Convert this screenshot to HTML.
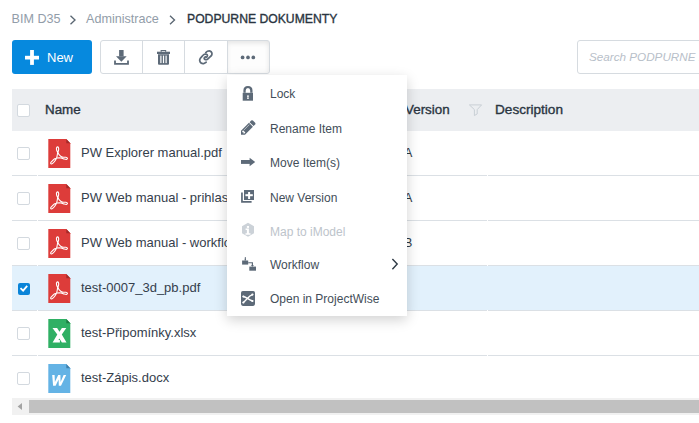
<!DOCTYPE html>
<html><head><meta charset="utf-8">
<style>
html,body{margin:0;padding:0;width:699px;height:423px;overflow:hidden;background:#fff;font-family:"Liberation Sans",sans-serif;}
.a{position:absolute;}
.t{position:absolute;white-space:nowrap;line-height:1;}
svg{position:absolute;overflow:visible;left:0;top:0;}
.bc{color:#929da9;font-size:12.6px;}
.bold{font-weight:400;color:#2a3541;-webkit-text-stroke:0.35px #2a3541;}
.cb{position:absolute;left:17px;width:11px;height:11px;border:1px solid #d3d9df;border-radius:2px;background:#fff;}
.row{position:absolute;left:12px;width:687px;height:44px;border-bottom:1px solid #dbe0e5;}
.rt{position:absolute;left:81px;font-size:13px;color:#35404c;white-space:nowrap;line-height:1;}
.ver{position:absolute;left:404px;font-size:12.5px;color:#2f3a45;line-height:1;}
.mi{position:absolute;left:270px;font-size:12px;color:#434e59;line-height:1;white-space:nowrap;}
</style></head><body>

<!-- breadcrumb -->
<div class="t bc" style="left:11.5px;top:13px;">BIM D35</div>
<svg width="699" height="30"><polyline points="70.5,15.8 75,20 70.5,24.2" fill="none" stroke="#5a6672" stroke-width="1.35"/><polyline points="170,15.8 174.5,20 170,24.2" fill="none" stroke="#5a6672" stroke-width="1.35"/></svg>
<div class="t bc" style="left:86px;top:13px;">Administrace</div>
<div class="t bold" style="left:187px;top:13px;font-size:12.2px;">PODPURNE DOKUMENTY</div>

<!-- New button -->
<div class="a" style="left:12px;top:40px;width:80px;height:34px;background:#0689de;border-radius:3px;"></div>
<svg width="100" height="80"><rect x="25" y="55.8" width="14" height="3.7" fill="#fff"/><rect x="30.1" y="50" width="3.8" height="14.9" fill="#fff"/></svg>
<div class="t" style="left:47px;top:51px;font-size:13px;color:#fff;">New</div>

<!-- toolbar group -->
<div class="a" style="left:227px;top:40px;width:42px;height:33px;border-radius:0 3px 3px 0;background:#fdfdfd;box-shadow:inset 0 3px 5px rgba(0,0,0,.1);"></div>
<div class="a" style="left:100px;top:40px;width:168px;height:32px;border:1px solid #d6dbe0;border-radius:3px;"></div>
<div class="a" style="left:142px;top:40px;width:1px;height:33px;background:#d6dbe0;"></div>
<div class="a" style="left:184px;top:40px;width:1px;height:33px;background:#d6dbe0;"></div>
<div class="a" style="left:227px;top:40px;width:1px;height:33px;background:#d6dbe0;"></div>
<svg width="300" height="80" fill="#5d6a78">
  <!-- download -->
  <rect x="119.1" y="50" width="4.5" height="6.4"/>
  <polygon points="116,56.2 126.7,56.2 121.35,61.7"/>
  <path d="M114.1 60.5h1.8v2.4h11.2v-2.4h1.8v4.2h-14.8z"/>
  <!-- trash -->
  <path d="M160.6 51.8v-1.8h5.6v1.8h-1.2v-0.7h-3.2v0.7z"/>
  <rect x="157" y="51.7" width="13" height="2.3"/>
  <path d="M158 54.3h11v9.4q0 1 -1 1h-9q-1 0 -1 -1z"/>
  <rect x="160.3" y="55.6" width="1.2" height="7.5" fill="#fff"/>
  <rect x="162.9" y="55.6" width="1.2" height="7.5" fill="#fff"/>
  <rect x="165.5" y="55.6" width="1.2" height="7.5" fill="#fff"/>
  <!-- link -->
  <g fill="none" stroke="#5d6a78" stroke-width="1.75" stroke-linecap="round" stroke-linejoin="round">
    <path d="M205.75 52.59C206.04 52.37 206.73 51.52 207.46 51.27C208.18 51.02 209.38 50.83 210.10 51.08C210.83 51.33 211.55 52.09 211.80 52.78C212.06 53.48 212.09 54.39 211.62 55.24C211.14 56.09 209.79 57.16 208.97 57.89C208.15 58.61 207.42 59.37 206.70 59.59C205.97 59.81 205.03 59.46 204.62 59.21C204.21 58.96 204.08 58.49 204.24 58.08C204.40 57.67 205.34 56.97 205.56 56.75"/>
    <path d="M206.13 62.24C205.72 62.46 204.52 63.44 203.67 63.56C202.82 63.69 201.69 63.47 201.03 62.99C200.36 62.52 199.83 61.48 199.70 60.72C199.58 59.97 199.92 59.15 200.27 58.46C200.62 57.76 201.09 57.26 201.78 56.56C202.48 55.87 203.64 54.67 204.43 54.30C205.22 53.92 206.01 54.07 206.51 54.30C207.01 54.52 207.42 55.15 207.46 55.62C207.49 56.09 206.83 56.88 206.70 57.13"/>
  </g>
  <!-- dots -->
  <circle cx="242.6" cy="57.4" r="1.85"/>
  <circle cx="248" cy="57.4" r="1.85"/>
  <circle cx="253.3" cy="57.4" r="1.85"/>
</svg>

<!-- search -->
<div class="a" style="left:577px;top:40px;width:140px;height:32px;border:1px solid #d6dbe0;border-radius:3px;"></div>
<div class="t" style="left:589px;top:50.5px;font-size:11.7px;color:#b8c0c9;font-style:italic;">Search PODPURNE DOKUMENTY</div>

<!-- table header -->
<div class="a" style="left:12px;top:89px;width:687px;height:42px;background:#eceef1;"></div>
<div class="cb" style="top:104px;"></div>
<div class="t bold" style="left:45px;top:103px;font-size:13.4px;">Name</div>
<div class="t bold" style="left:405px;top:103px;font-size:13.4px;">Version</div>
<svg width="699" height="140"><path d="M469.4 104.9H481.6L477.2 109.6V113.9L474.4 115.6V109.6Z" fill="none" stroke="#c9cfd5" stroke-width="1" stroke-linejoin="round"/></svg>
<div class="t bold" style="left:495px;top:103px;font-size:13.6px;">Description</div>

<!-- rows -->
<div class="row" style="top:131px;"></div>
<div class="row" style="top:176px;"></div>
<div class="row" style="top:221px;"></div>
<div class="row" style="top:266px;background:#e2f1fc;"></div>
<div class="row" style="top:311px;"></div>
<div class="row" style="top:356px;"></div>

<div class="a" style="left:37px;top:175px;width:1px;height:1px;background:#fff;"></div><div class="a" style="left:487px;top:175px;width:1px;height:1px;background:#fff;"></div><div class="a" style="left:37px;top:220px;width:1px;height:1px;background:#fff;"></div><div class="a" style="left:487px;top:220px;width:1px;height:1px;background:#fff;"></div><div class="a" style="left:37px;top:265px;width:1px;height:1px;background:#fff;"></div><div class="a" style="left:487px;top:265px;width:1px;height:1px;background:#fff;"></div><div class="a" style="left:37px;top:310px;width:1px;height:1px;background:#fff;"></div><div class="a" style="left:487px;top:310px;width:1px;height:1px;background:#fff;"></div><div class="a" style="left:37px;top:355px;width:1px;height:1px;background:#fff;"></div><div class="a" style="left:487px;top:355px;width:1px;height:1px;background:#fff;"></div>
<div class="cb" style="top:147px;"></div>
<div class="cb" style="top:192px;"></div>
<div class="cb" style="top:237px;"></div>
<div class="a" style="left:17.5px;top:282.5px;width:12px;height:12px;border-radius:2px;background:#0a84d8;"></div>
<div class="cb" style="top:327px;"></div>
<div class="cb" style="top:372px;"></div>
<svg width="100" height="423">
  <polyline points="20.5,288.2 23.1,290.7 27.2,285.9" fill="none" stroke="#fff" stroke-width="1.8"/>
</svg>

<!-- file icons -->
<svg width="100" height="423">
  <g transform="translate(48.3 139)">
      <path d="M0 0h18l4 4.2v24.8h-22z" fill="#dd3c3a"/>
      <path d="M18 0l4 4.2h-4z" fill="#a32a28"/>
      <path d="M9.34 13.62C9.17 13.20 8.50 11.85 8.32 11.07C8.13 10.29 8.09 9.46 8.23 8.94C8.37 8.41 8.84 7.94 9.17 7.91C9.50 7.88 9.99 8.31 10.19 8.76C10.39 9.22 10.43 9.83 10.36 10.64C10.29 11.45 9.58 12.66 9.77 13.62C9.95 14.59 10.76 15.68 11.47 16.44C12.18 17.19 13.03 17.83 14.03 18.14C15.02 18.45 16.59 18.11 17.44 18.31C18.29 18.51 19.04 18.98 19.14 19.34C19.24 19.69 18.68 20.36 18.04 20.44C17.40 20.53 16.19 20.09 15.31 19.85C14.43 19.61 13.74 19.14 12.75 18.99C11.76 18.85 10.41 18.85 9.34 18.99C8.27 19.14 7.28 19.32 6.36 19.85C5.43 20.37 4.47 21.48 3.80 22.15C3.13 22.82 2.49 23.39 2.35 23.85C2.21 24.32 2.56 24.92 2.95 24.96C3.33 25.01 4.01 24.65 4.65 24.11C5.29 23.57 6.14 22.69 6.78 21.72C7.42 20.76 8.06 19.66 8.49 18.31C8.91 16.96 9.20 14.41 9.34 13.62" fill="none" stroke="#fff" stroke-width="1.1" stroke-linejoin="round"/>
    </g>
  <g transform="translate(48.3 184)">
      <path d="M0 0h18l4 4.2v24.8h-22z" fill="#dd3c3a"/>
      <path d="M18 0l4 4.2h-4z" fill="#a32a28"/>
      <path d="M9.34 13.62C9.17 13.20 8.50 11.85 8.32 11.07C8.13 10.29 8.09 9.46 8.23 8.94C8.37 8.41 8.84 7.94 9.17 7.91C9.50 7.88 9.99 8.31 10.19 8.76C10.39 9.22 10.43 9.83 10.36 10.64C10.29 11.45 9.58 12.66 9.77 13.62C9.95 14.59 10.76 15.68 11.47 16.44C12.18 17.19 13.03 17.83 14.03 18.14C15.02 18.45 16.59 18.11 17.44 18.31C18.29 18.51 19.04 18.98 19.14 19.34C19.24 19.69 18.68 20.36 18.04 20.44C17.40 20.53 16.19 20.09 15.31 19.85C14.43 19.61 13.74 19.14 12.75 18.99C11.76 18.85 10.41 18.85 9.34 18.99C8.27 19.14 7.28 19.32 6.36 19.85C5.43 20.37 4.47 21.48 3.80 22.15C3.13 22.82 2.49 23.39 2.35 23.85C2.21 24.32 2.56 24.92 2.95 24.96C3.33 25.01 4.01 24.65 4.65 24.11C5.29 23.57 6.14 22.69 6.78 21.72C7.42 20.76 8.06 19.66 8.49 18.31C8.91 16.96 9.20 14.41 9.34 13.62" fill="none" stroke="#fff" stroke-width="1.1" stroke-linejoin="round"/>
    </g>
  <g transform="translate(48.3 229)">
      <path d="M0 0h18l4 4.2v24.8h-22z" fill="#dd3c3a"/>
      <path d="M18 0l4 4.2h-4z" fill="#a32a28"/>
      <path d="M9.34 13.62C9.17 13.20 8.50 11.85 8.32 11.07C8.13 10.29 8.09 9.46 8.23 8.94C8.37 8.41 8.84 7.94 9.17 7.91C9.50 7.88 9.99 8.31 10.19 8.76C10.39 9.22 10.43 9.83 10.36 10.64C10.29 11.45 9.58 12.66 9.77 13.62C9.95 14.59 10.76 15.68 11.47 16.44C12.18 17.19 13.03 17.83 14.03 18.14C15.02 18.45 16.59 18.11 17.44 18.31C18.29 18.51 19.04 18.98 19.14 19.34C19.24 19.69 18.68 20.36 18.04 20.44C17.40 20.53 16.19 20.09 15.31 19.85C14.43 19.61 13.74 19.14 12.75 18.99C11.76 18.85 10.41 18.85 9.34 18.99C8.27 19.14 7.28 19.32 6.36 19.85C5.43 20.37 4.47 21.48 3.80 22.15C3.13 22.82 2.49 23.39 2.35 23.85C2.21 24.32 2.56 24.92 2.95 24.96C3.33 25.01 4.01 24.65 4.65 24.11C5.29 23.57 6.14 22.69 6.78 21.72C7.42 20.76 8.06 19.66 8.49 18.31C8.91 16.96 9.20 14.41 9.34 13.62" fill="none" stroke="#fff" stroke-width="1.1" stroke-linejoin="round"/>
    </g>
  <g transform="translate(48.3 274)">
      <path d="M0 0h18l4 4.2v24.8h-22z" fill="#dd3c3a"/>
      <path d="M18 0l4 4.2h-4z" fill="#a32a28"/>
      <path d="M9.34 13.62C9.17 13.20 8.50 11.85 8.32 11.07C8.13 10.29 8.09 9.46 8.23 8.94C8.37 8.41 8.84 7.94 9.17 7.91C9.50 7.88 9.99 8.31 10.19 8.76C10.39 9.22 10.43 9.83 10.36 10.64C10.29 11.45 9.58 12.66 9.77 13.62C9.95 14.59 10.76 15.68 11.47 16.44C12.18 17.19 13.03 17.83 14.03 18.14C15.02 18.45 16.59 18.11 17.44 18.31C18.29 18.51 19.04 18.98 19.14 19.34C19.24 19.69 18.68 20.36 18.04 20.44C17.40 20.53 16.19 20.09 15.31 19.85C14.43 19.61 13.74 19.14 12.75 18.99C11.76 18.85 10.41 18.85 9.34 18.99C8.27 19.14 7.28 19.32 6.36 19.85C5.43 20.37 4.47 21.48 3.80 22.15C3.13 22.82 2.49 23.39 2.35 23.85C2.21 24.32 2.56 24.92 2.95 24.96C3.33 25.01 4.01 24.65 4.65 24.11C5.29 23.57 6.14 22.69 6.78 21.72C7.42 20.76 8.06 19.66 8.49 18.31C8.91 16.96 9.20 14.41 9.34 13.62" fill="none" stroke="#fff" stroke-width="1.1" stroke-linejoin="round"/>
    </g>
  <g transform="translate(48.3 319)">
    <path d="M0 0h18l4 4.2v24.8h-22z" fill="#2fb064"/>
    <path d="M18 0l4 4.2h-4z" fill="#1d7a43"/>
    <path d="M4.2 9h4.6l2.4 3.8l2.4-3.8h4.4l-4.5 6.6l4.7 8h-4.6l-2.5-4.2l-1 1.6h1.5v2.6h-7.3l4.7-8z" fill="#fff"/>
  </g>
  <g transform="translate(48.3 364)">
    <path d="M0 0h18l4 4.2v24.8h-22z" fill="#64b3e5"/>
    <path d="M18 0l4 4.2h-4z" fill="#3d7fab"/>
    <path d="M3.9 11.0 L6.3 11.0 L6.6 18.0 L9.9 11.0 L12.1 11.0 L12.3 18.0 L15.3 11.0 L17.9 11.0 L12.7 21.7 L10.5 21.7 L10.3 15.5 L7.3 21.7 L4.8 21.7z" fill="#fff"/>
  </g>
</svg>

<div class="rt" style="top:146px;">PW Explorer manual.pdf</div>
<div class="rt" style="top:191px;">PW Web manual - prihlaseni.pdf</div>
<div class="rt" style="top:236px;">PW Web manual - workflow.pdf</div>
<div class="rt" style="top:281px;">test-0007_3d_pb.pdf</div>
<div class="rt" style="top:326px;">test-Připomínky.xlsx</div>
<div class="rt" style="top:371px;">test-Zápis.docx</div>
<div class="ver" style="top:147px;">A</div>
<div class="ver" style="top:192px;">A</div>
<div class="ver" style="top:237px;">B</div>

<!-- menu -->
<div class="a" style="left:227px;top:75px;width:180px;height:241px;background:#fff;box-shadow:0 4px 12px rgba(0,0,0,.18);"></div>
<div class="mi" style="top:87.5px;">Lock</div>
<div class="mi" style="top:123.2px;">Rename Item</div>
<div class="mi" style="top:157.2px;">Move Item(s)</div>
<div class="mi" style="top:191.5px;">New Version</div>
<div class="mi" style="top:225.8px;color:#bdc4cb;">Map to iModel</div>
<div class="mi" style="top:259px;">Workflow</div>
<div class="mi" style="top:293px;">Open in ProjectWise</div>
<svg width="699" height="423" fill="#5d6a78">
  <!-- lock -->
  <path d="M243.4 92.8v-2.3q0-4.5 4.55-4.5q4.55 0 4.55 4.5v2.3h-2.3v-2.3q0-2.5-2.25-2.5q-2.25 0-2.25 2.5v2.3z"/>
  <path d="M242.7 92.8h10.3v7.9h-10.3z"/>
  <rect x="247.1" y="95.4" width="1.7" height="1.5" fill="#fff"/>
  <rect x="247.1" y="97.4" width="1.7" height="1.5" fill="#fff"/>
  <!-- pencil -->
  <path transform="translate(241 120.2) scale(0.00957) translate(0 -149)" d="M363 1536l91-91-235-235-91 91v107h128v128h107zm523-928q0-22-22-22-10 0-17 7l-542 542q-7 7-7 17 0 22 22 22 10 0 17-7l542-542q7-7 7-17zm-54-192l416 416-832 832h-416v-416zm683 96q0 53-37 90l-166 166-416-416 166-165q36-38 90-38 53 0 91 38l235 234q37 39 37 91z"/>
  <!-- arrow -->
  <rect x="241" y="160" width="10" height="3.9"/>
  <polygon points="249.6,157.7 255.2,161.95 249.6,166.2"/>
  <!-- new version -->
  <rect x="244" y="190" width="10" height="10"/>
  <rect x="245.4" y="194.2" width="7.4" height="2" fill="#fff"/>
  <rect x="248.1" y="192" width="2" height="7" fill="#fff"/>
  <path d="M241.1 192.5h1.7v8.5h8.8v1.7h-10.5z"/>
  <!-- workflow -->
  <rect x="242.1" y="260.5" width="6.1" height="4.1"/>
  <path d="M244.5 260.5l0.4-3.4h0.8l0.4 3.4z"/>
  <path d="M248.2 262.2h4.8v3.7h-1.2v-2.7h-3.6z"/>
  <rect x="249.3" y="266.6" width="6.7" height="4.1"/>
  <path d="M250.7 265.2h3.4l-1.7 1.5z"/>
  <!-- projectwise -->
  <rect x="241" y="291" width="14" height="14.9" rx="1.8"/>
  <g fill="none" stroke="#fff" stroke-width="1.5" stroke-linecap="round" stroke-linejoin="round">
    <path d="M243.3 296.5Q245.5 297.3 247.4 298.3Q250 299.9 252.5 301"/>
    <path d="M243.3 302.5Q245.6 300.6 247.4 298.4Q249.8 295.6 252.5 294.6"/>
  </g>
  <g fill="#fff"><circle cx="243.4" cy="296.5" r="1.1"/><circle cx="252.4" cy="301" r="1.1"/><circle cx="243.4" cy="302.5" r="1.1"/><circle cx="252.4" cy="294.6" r="1.1"/></g>
  <!-- chevron -->
  <polyline points="392.4,258.9 397.2,264 392.4,269.2" fill="none" stroke="#2f3a45" stroke-width="1.4"/>
</svg>
<svg width="699" height="423" fill="#ccd2d8">
  <path d="M248 222.8l6 3.4v7l-6 3.5l-6-3.5v-7z"/>
  <rect x="246.9" y="226" width="2.1" height="1.9" fill="#fff"/>
  <path d="M245.6 228.6h3.3v4.7h1.6v1.5h-5v-1.5h1.4v-3.2h-1.3z" fill="#fff"/>
</svg>

<!-- scrollbar -->
<div class="a" style="left:12px;top:398px;width:687px;height:17px;background:#f1f1f1;"></div>
<div class="a" style="left:29px;top:400px;width:670px;height:12.5px;background:#c1c1c1;"></div>
<svg width="100" height="423"><polygon points="22,403 22,410 17.6,406.5" fill="#a3a3a3"/></svg>
</body></html>
